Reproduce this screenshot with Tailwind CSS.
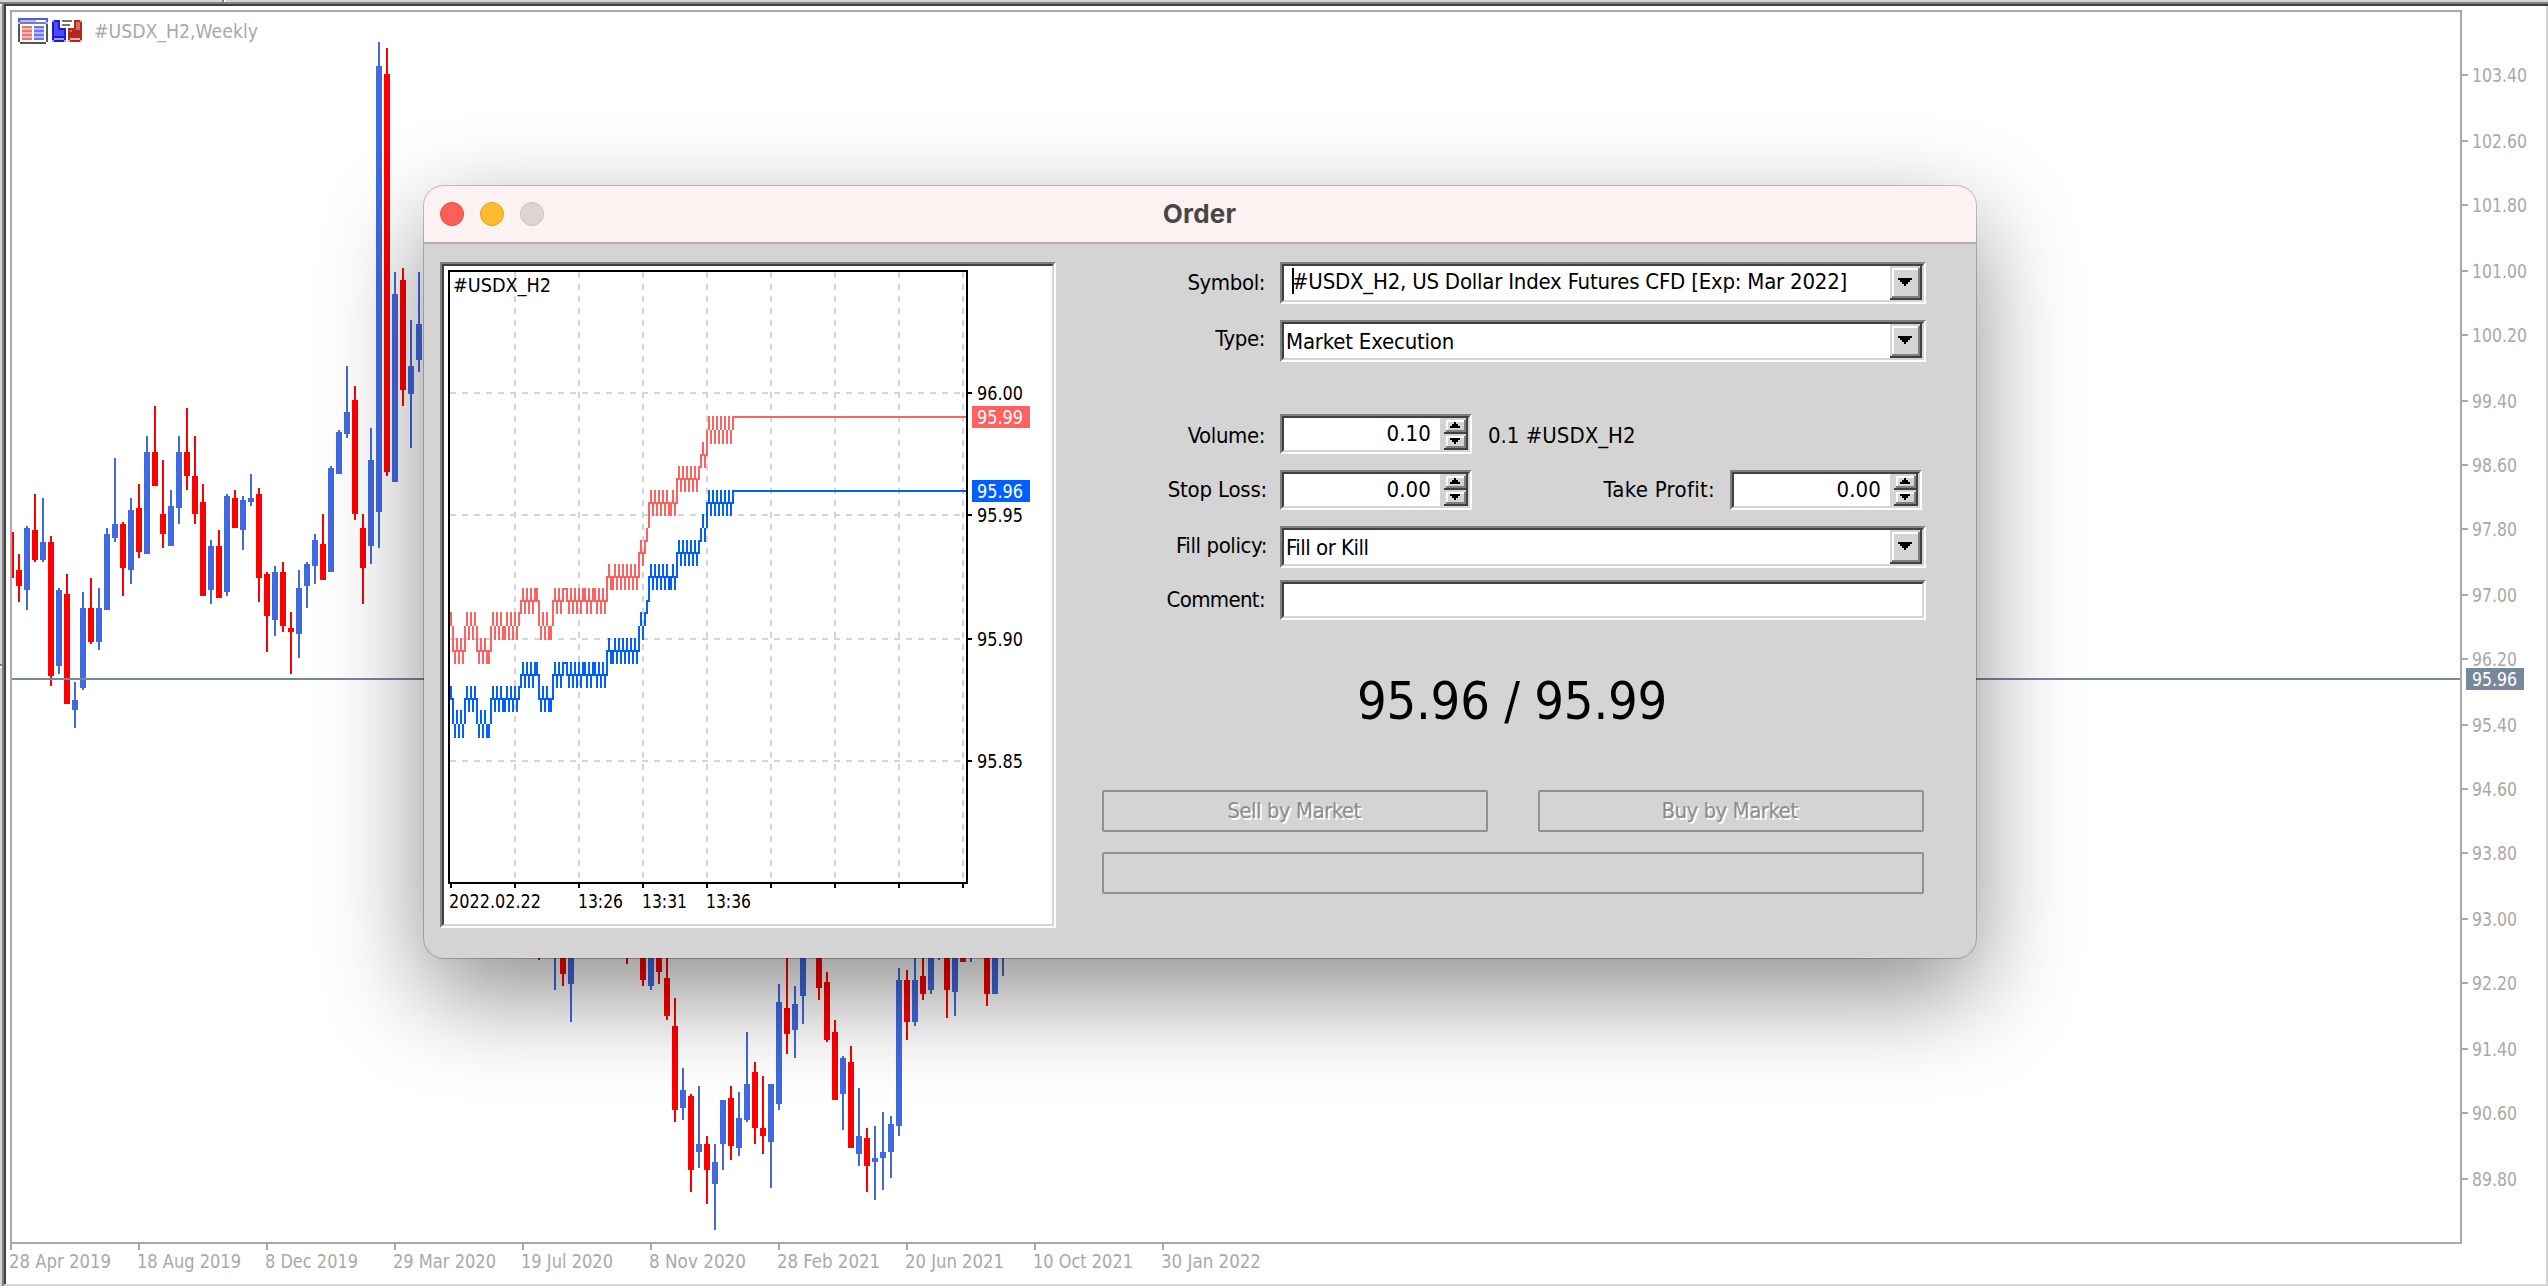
<!DOCTYPE html>
<html>
<head>
    <meta charset="utf-8">
    <title>Order</title>
    <script src="https://cdn.jsdelivr.net/npm/@tailwindcss/browser@4"></script>
</head>
<body class="relative w-[2548px] h-[1286px] overflow-hidden bg-white font-['DejaVu_Sans_Condensed','DejaVu_Sans',sans-serif]">
    <!-- Weekly chart -->
    <svg id="chart" class="block" width="2548" height="1286" shape-rendering="crispEdges">
        <path fill="#d4d4d4" d="M0 0h2548v2H0zM0 0h2v1286H0zM2546 6h2v1280h-2zM4 1284h2544v2H4z"/>
        <path fill="#808080" d="M0 2h2548v2H0zM2 2h2v1284h-2zM222 0h2v2h-2zM0 664h2v2H0z"/>
        <path fill="#404040" d="M4 4h2544v2H4zM4 4h2v1280h-2z"/>
        <path fill="#fff" d="M224 0h2v2h-2zM0 4h2v2H0zM0 666h2v2H0z"/>
        <g id="candles"></g>
        <path fill="#778899" d="M12 678h2448v2H12z"/>
        <path fill="#a9a9a9" d="M10 10h2452v2H10zM10 10h2v1240h-2zM2460 10h2v1234h-2zM10 1242h2452v2H10z"/>
        <g id="axes" fill="#a9a9a9" font-size="19"></g>
        <rect x="2466" y="668" width="58" height="22" fill="#778899"/>
        <text x="2472" y="686" font-size="19" fill="#fff" textLength="45" lengthAdjust="spacingAndGlyphs">95.96</text>

        <!-- depth of market icon -->
        <g>
            <path fill="#555" d="M18 24h30v18H18zM20 42h26v2H20z"/>
            <path fill="#5058f0" d="M18 18h30v4H18z"/>
            <path fill="#b8b8ff" d="M20 20h16v2H20zM18 22h30v2H18z"/>
            <path fill="#fff" d="M36 20h10v2H36zM20 24h26v18H20z"/>
            <path fill="#7080b0" d="M20 22h26v2H20z"/>
            <path fill="#f3b5ae" d="M22 26h10v14H22z"/>
            <path fill="#e07870" d="M22 26h10v2H22zM22 30h10v2H22zM22 34h10v2H22zM22 38h10v2H22z"/>
            <path fill="#b8b8ff" d="M34 26h10v14H34z"/>
            <path fill="#7070f8" d="M34 26h10v2H34zM34 30h10v2H34zM34 34h10v2H34zM34 38h10v2H34z"/>
        </g>
        <!-- one click trading icon -->
        <g>
            <path fill="#1a1ae0" d="M52 20h8v8h6v14H52z"/>
            <path fill="#4c4cf0" d="M54 22h4v8h6v6H54z"/>
            <path fill="#a0a0ff" d="M54 38h10v2H54zM52 20h2v2h-2zM52 40h2v2h-2zM64 40h2v2h-2z"/>
            <path fill="#b02820" d="M74 20h8v22H68V28h6z"/>
            <path fill="#d86860" d="M76 22h4v8h-4zM70 30h2v2h-2z"/>
            <path fill="#f0a8a0" d="M70 38h10v2H70zM80 20h2v2h-2zM68 40h2v2h-2zM80 40h2v2h-2z"/>
            <path fill="#707870" d="M62 20h10v2H62zM62 24h8v2h-8z"/>
        </g>
        <text x="94" y="38" font-size="19" fill="#a9a9a9" textLength="164" lengthAdjust="spacingAndGlyphs">#USDX_H2,Weekly</text>
    </svg>

    <!-- Order window -->
    <div class="absolute left-[424px] top-[186px] w-[1552px] h-[772px] flex flex-col rounded-[20px] overflow-hidden bg-[#d4d4d4] shadow-[0_0_0_1px_rgba(0,0,0,0.22),0_36px_100px_rgba(0,0,0,0.45)]">
        <div class="relative h-[58px] shrink-0 flex items-center justify-center bg-[#fcf2f1] border-b-2 border-[#b4b0b0]">
            <div class="absolute left-4 flex gap-4">
                <div class="size-6 rounded-full bg-[#ff5f57] border border-[#e2463f]"></div>
                <div class="size-6 rounded-full bg-[#febc2e] border border-[#e1a116]"></div>
                <div class="size-6 rounded-full bg-[#ddd4d4] border border-[#cbc3c3]"></div>
            </div>
            <span class="pb-0.5 pr-px font-['Inter',sans-serif] font-bold text-[26px] tracking-[0.2px] text-[#4a4646]">Order</span>
        </div>

        <div class="flex pl-4 pt-[18px]">
            <!-- Tick chart -->
            <div class="w-[616px] h-[666px] shrink-0 border-2 border-t-[#808080] border-l-[#808080] border-b-white border-r-white">
                <div class="w-[612px] h-[662px] border-2 border-t-[#404040] border-l-[#404040] border-b-[#d4d4d4] border-r-[#d4d4d4] bg-white">
                    <svg id="ticks" class="block" width="608" height="658" viewBox="444 266 608 658" shape-rendering="crispEdges">
                        <path stroke="#d4d4d4" stroke-width="2" stroke-dasharray="6 6" d="M450 393H966M450 515H966M450 639H966M450 761H966M515 272V882M579 272V882M643 272V882M707 272V882M771 272V882M835 272V882M899 272V882M963 272V882"/>
                        <g id="lines"></g>
                        <path fill="none" stroke="#000" stroke-width="2" d="M449 271H967V883H449z"/>
                        <path stroke="#000" stroke-width="2" d="M968 393h4M968 515h4M968 639h4M968 761h4M451 884v4M515 884v4M579 884v4M643 884v4M707 884v4M771 884v4M835 884v4M899 884v4M963 884v4"/>
                        <rect x="972" y="406" width="58" height="22" fill="#ff6060"/>
                        <rect x="972" y="480" width="58" height="22" fill="#0060ff"/>
                        <g font-size="19">
                            <text x="453" y="292" textLength="98" lengthAdjust="spacingAndGlyphs">#USDX_H2</text>
                            <text x="977" y="400" textLength="46" lengthAdjust="spacingAndGlyphs">96.00</text>
                            <text x="977" y="424" textLength="46" lengthAdjust="spacingAndGlyphs" fill="#fff">95.99</text>
                            <text x="977" y="498" textLength="46" lengthAdjust="spacingAndGlyphs" fill="#fff">95.96</text>
                            <text x="977" y="522" textLength="46" lengthAdjust="spacingAndGlyphs">95.95</text>
                            <text x="977" y="646" textLength="46" lengthAdjust="spacingAndGlyphs">95.90</text>
                            <text x="977" y="768" textLength="46" lengthAdjust="spacingAndGlyphs">95.85</text>
                            <text x="449" y="908" textLength="92" lengthAdjust="spacingAndGlyphs">2022.02.22</text>
                            <text x="578" y="908" textLength="45" lengthAdjust="spacingAndGlyphs">13:26</text>
                            <text x="642" y="908" textLength="45" lengthAdjust="spacingAndGlyphs">13:31</text>
                            <text x="706" y="908" textLength="45" lengthAdjust="spacingAndGlyphs">13:36</text>
                        </g>
                    </svg>
                </div>
            </div>

            <!-- Order form -->
            <div class="ml-[46px] w-[824px] text-[22px] leading-[26px] tracking-[-0.4px] text-black">
                <div class="flex items-center h-[42px]">
                    <label class="w-[163px] mr-[15px] text-right">Symbol:</label>
                    <div class="w-[646px] h-[42px] border-2 border-t-[#808080] border-l-[#808080] border-b-white border-r-white">
                        <div class="h-[38px] flex border-2 border-t-[#404040] border-l-[#404040] border-b-[#d4d4d4] border-r-[#d4d4d4] bg-white">
                            <div class="relative flex-1 pl-2 pt-[3px] whitespace-nowrap tracking-[-0.22px]"><span class="absolute left-2 top-0.5 w-0.5 h-[26px] bg-black"></span>#USDX_H2, US Dollar Index Futures CFD [Exp: Mar 2022]</div>
                            <svg width="32" height="34" shape-rendering="crispEdges"><use href="#drop"/></svg>
                        </div>
                    </div>
                </div>
                <div class="flex items-center h-[42px] mt-4">
                    <label class="w-[163px] mr-[15px] pb-[5px] text-right">Type:</label>
                    <div class="w-[646px] h-[42px] border-2 border-t-[#808080] border-l-[#808080] border-b-white border-r-white">
                        <div class="h-[38px] flex border-2 border-t-[#404040] border-l-[#404040] border-b-[#d4d4d4] border-r-[#d4d4d4] bg-white">
                            <div class="flex-1 pl-0.5 pt-[5px] tracking-[-0.2px]">Market Execution</div>
                            <svg width="32" height="34" shape-rendering="crispEdges"><use href="#drop"/></svg>
                        </div>
                    </div>
                </div>
                <div class="flex items-center h-10 mt-[52px]">
                    <label class="w-[163px] mr-[15px] pt-1 text-right">Volume:</label>
                    <div class="w-48 h-10 border-2 border-t-[#808080] border-l-[#808080] border-b-white border-r-white">
                        <div class="h-9 flex border-2 border-t-[#404040] border-l-[#404040] border-b-[#d4d4d4] border-r-[#d4d4d4] bg-white">
                            <div class="flex-1 pr-[9px] pt-[3px] text-right tracking-[0.1px]">0.10</div>
                            <svg width="28" height="32" shape-rendering="crispEdges"><use href="#spin"/></svg>
                        </div>
                    </div>
                    <span class="ml-4 pt-1 tracking-[0px]">0.1 #USDX_H2</span>
                </div>
                <div class="flex items-center h-10 mt-4">
                    <label class="w-[165px] mr-[13px] text-right tracking-[-0.2px]">Stop Loss:</label>
                    <div class="w-48 h-10 border-2 border-t-[#808080] border-l-[#808080] border-b-white border-r-white">
                        <div class="h-9 flex border-2 border-t-[#404040] border-l-[#404040] border-b-[#d4d4d4] border-r-[#d4d4d4] bg-white">
                            <div class="flex-1 pr-[9px] pt-[3px] text-right tracking-[0.1px]">0.00</div>
                            <svg width="28" height="32" shape-rendering="crispEdges"><use href="#spin"/></svg>
                        </div>
                    </div>
                    <label class="w-[243px] mr-[15px] text-right tracking-[0.3px]">Take Profit:</label>
                    <div class="w-48 h-10 border-2 border-t-[#808080] border-l-[#808080] border-b-white border-r-white">
                        <div class="h-9 flex border-2 border-t-[#404040] border-l-[#404040] border-b-[#d4d4d4] border-r-[#d4d4d4] bg-white">
                            <div class="flex-1 pr-[9px] pt-[3px] text-right tracking-[0.1px]">0.00</div>
                            <svg width="28" height="32" shape-rendering="crispEdges"><use href="#spin"/></svg>
                        </div>
                    </div>
                </div>
                <div class="flex items-center h-[42px] mt-4">
                    <label class="w-[165px] mr-[13px] pb-0.5 text-right">Fill policy:</label>
                    <div class="w-[646px] h-[42px] border-2 border-t-[#808080] border-l-[#808080] border-b-white border-r-white">
                        <div class="h-[38px] flex border-2 border-t-[#404040] border-l-[#404040] border-b-[#d4d4d4] border-r-[#d4d4d4] bg-white">
                            <div class="flex-1 pl-0.5 pt-[5px] tracking-[-0.5px]">Fill or Kill</div>
                            <svg width="32" height="34" shape-rendering="crispEdges"><use href="#drop"/></svg>
                        </div>
                    </div>
                </div>
                <div class="flex items-center h-10 mt-3">
                    <label class="w-[163px] mr-[15px] text-right tracking-[-0.65px]">Comment:</label>
                    <div class="w-[646px] h-10 border-2 border-t-[#808080] border-l-[#808080] border-b-white border-r-white">
                        <div class="h-9 border-2 border-t-[#404040] border-l-[#404040] border-b-[#d4d4d4] border-r-[#d4d4d4] bg-white"></div>
                    </div>
                </div>

                <div class="h-[170px] pt-[49px] pr-1 text-center text-[52px] leading-[64px] tracking-[-0.25px]">95.96 / 95.99</div>

                <div class="flex justify-between w-[822px] tracking-[-0.5px] text-[#8c8c8c] [text-shadow:2px_2px_0_#fff]">
                    <div class="w-[386px] h-[42px] pr-0.5 flex items-center justify-center border-2 border-[#909090] rounded-[2px]">Sell by Market</div>
                    <div class="w-[386px] h-[42px] pr-[3px] flex items-center justify-center border-2 border-[#909090] rounded-[2px]">Buy by Market</div>
                </div>
                <div class="mt-5 w-[822px] h-[42px] border-2 border-[#909090] rounded-[2px]"></div>
            </div>
        </div>
    </div>

    <svg class="hidden">
        <defs>
            <g id="drop">
                <path fill="#404040" d="M0 0h32v34H0z"/>
                <path fill="#d4d4d4" d="M0 0h30v32H0z"/>
                <path fill="#808080" d="M2 2h28v30H2z"/>
                <path fill="#fff" d="M2 2h26v28H2z"/>
                <path fill="#d4d4d4" d="M4 4h24v26H4z"/>
                <path d="M8 12h14v2H8zM10 14h10v2H10zM12 16h6v2h-6zM14 18h2v2h-2z"/>
            </g>
            <g id="btn">
                <path fill="#404040" d="M0 0h24v16H0z"/>
                <path fill="#d4d4d4" d="M0 0h22v14H0z"/>
                <path fill="#808080" d="M2 2h20v12H2z"/>
                <path fill="#fff" d="M2 2h18v10H2z"/>
                <path fill="#d4d4d4" d="M4 4h16v8H4z"/>
            </g>
            <g id="spin">
                <path fill="#d4d4d4" d="M0 0h28v32H0z"/>
                <use href="#btn" x="4" y="0"/>
                <use href="#btn" x="4" y="16"/>
                <path d="M14 4h2v2h-2zM12 6h6v2h-6zM10 8h10v2H10zM10 20h10v2H10zM12 22h6v2h-6zM14 24h2v2h-2z"/>
            </g>
        </defs>
    </svg>

    <script>
        // slot, direction (1 up, 0 down), high, body top, body bottom, low
        const candles = [
            [0,0,554,570,586,602],[1,1,526,528,590,610],[2,0,494,530,560,562],[3,1,498,542,560,562],[4,0,536,542,676,686],
            [5,1,588,590,666,674],[6,0,574,594,704,704],[7,1,682,700,710,728],[8,1,592,608,688,690],[9,0,578,608,642,644],
            [10,1,588,608,642,650],[11,1,528,534,610,610],[12,1,458,524,538,542],[13,0,522,524,568,596],[14,1,498,510,570,584],
            [15,0,484,508,552,558],[16,1,436,452,554,554],[17,0,406,452,486,486],[18,0,460,514,534,548],[19,1,490,506,546,546],
            [20,1,436,452,508,524],[21,0,408,452,476,490],[22,0,436,476,514,524],[23,0,484,502,596,596],[24,1,540,546,590,604],
            [25,0,530,546,598,598],[26,1,494,496,592,596],[27,0,490,498,528,528],[28,1,496,500,530,550],[29,1,474,498,502,506],
            [30,0,488,494,578,602],[31,0,572,574,616,652],[32,1,566,572,620,636],[33,0,562,572,626,632],[34,0,612,628,632,674],
            [35,1,570,588,634,658],[36,1,562,564,586,608],[37,1,534,540,566,584],[38,0,514,544,580,580],[39,1,466,468,572,572],
            [40,1,430,432,474,474],[41,1,366,412,434,438],[42,0,386,400,514,520],[43,0,514,528,568,604],[44,1,428,460,546,564],
            [45,1,42,66,512,548],[46,0,48,74,472,476],[47,1,272,294,482,482],[48,0,268,280,390,406],[49,1,320,366,394,448],
            [50,1,272,324,360,372],[65,0,940,940,940,960],[67,1,940,940,940,990],[68,0,940,940,974,986],[69,1,940,940,984,1022],
            [76,0,940,940,940,964],[78,0,940,940,980,986],[79,1,940,940,986,990],[80,0,940,940,972,984],[81,0,940,978,1016,1020],
            [82,0,998,1026,1110,1122],[83,1,1068,1090,1108,1120],[84,0,1094,1096,1170,1192],[85,1,1086,1144,1152,1168],[86,0,1136,1144,1170,1204],
            [87,1,1144,1162,1184,1230],[88,1,1100,1100,1144,1170],[89,0,1086,1098,1146,1160],[90,1,1092,1118,1148,1156],[91,1,1032,1084,1120,1122],
            [92,0,1062,1072,1128,1144],[93,0,1076,1128,1136,1154],[94,1,1084,1084,1142,1188],[95,1,984,1002,1104,1110],[96,0,940,1008,1034,1054],
            [97,1,986,1004,1030,1058],[98,1,940,940,996,1024],[100,0,940,940,988,1000],[101,0,972,982,1040,1042],[102,0,1020,1032,1100,1100],
            [103,1,1056,1058,1094,1130],[104,0,1046,1062,1148,1148],[105,1,1088,1136,1154,1166],[106,0,1128,1138,1166,1192],[107,1,1126,1158,1162,1200],
            [108,1,1112,1152,1158,1190],[109,1,1116,1124,1152,1178],[110,1,968,980,1126,1136],[111,0,970,980,1022,1040],[112,1,940,980,1022,1026],
            [113,0,940,976,994,1000],[114,1,940,940,990,994],[115,1,940,940,940,960],[116,0,940,940,990,1018],[117,1,940,940,992,1016],
            [118,0,940,940,962,962],[119,1,940,940,940,962],[121,0,940,940,994,1006],[122,1,940,940,994,994],[123,1,940,940,940,976]
        ];
        let out = '<path fill="#f00" d="M12 532h2v46h-2z"/>';
        candles.forEach(([i, up, h, t, b, l]) => {
            const x = 16 + i * 8;
            out += `<path fill="${up ? '#4169e1' : '#f00'}" d="M${x + 2} ${h}h2V${l}h-2zM${x} ${t}h6V${b}h-6z"/>`;
        });
        document.getElementById('candles').innerHTML = out;

        // price and date scales
        const prices = [74, 140, 204, 270, 334, 400, 464, 528, 594, 658, 724, 788, 852, 918, 982, 1048, 1112, 1178];
        const dates = [['28 Apr 2019', 102], ['18 Aug 2019', 104], ['8 Dec 2019', 93], ['29 Mar 2020', 103], ['19 Jul 2020', 92],
            ['8 Nov 2020', 97], ['28 Feb 2021', 103], ['20 Jun 2021', 99], ['10 Oct 2021', 100], ['30 Jan 2022', 100]];
        out = '';
        prices.forEach((y, i) => {
            const p = (103.4 - i * 0.8).toFixed(2);
            out += `<path d="M2462 ${y}h6v2h-6z"/><text x="2472" y="${y + 8}" textLength="${p.length > 5 ? 55 : 45}" lengthAdjust="spacingAndGlyphs">${p}</text>`;
        });
        dates.forEach(([d, w], i) => {
            const x = 10 + i * 128;
            out += `<path d="M${x} 1244h2v6h-2z"/><text x="${x - 1}" y="1268" textLength="${w}" lengthAdjust="spacingAndGlyphs">${d}</text>`;
        });
        document.getElementById('axes').innerHTML = out;

        // ticks: one column per pair of letters, top and bottom price level
        const levels = [416,430,442,454,466,478,490,502,514,528,540,552,564,576,588,600,612,626,638,650,662,674,686,698,710,724,736];
        const cols = ('qr rt tu st tu st tu rt qr rs qr rs qr rt tu st tu st tu tu rt qr rs qr rs qr rs rs qr rs qr rs qr rs qr pq ' +
            'op pq op pq op pq op op pr rs qr rs qr rs rs pr op pq op pq op oo op pq op pq op pq op pq op op pq op pq op op pq op pq op pq np ' +
            'mn no no mn no mn no mn no mn no mn no mn no ln kl lm kl jk hj gh hi gh hi gh hi gh hi gh hi hi gh hi fh ' +
            'ef fg ef fg ef fg ef fg ef fg ef de cd de bd ab bc ab bc ab bc ab bc ab bc ab bc ab').split(' ');
        const line = (shift, color) => {
            let d = '';
            cols.forEach((c, k) => {
                const a = c.charCodeAt(0) - 97 + shift, b = c.charCodeAt(1) - 97 + shift;
                const end = levels[b] + (b && levels[b] - levels[b - 1] === 14 ? 0 : 2);
                d += `M${450 + k * 2} ${levels[a]}h2V${end}h-2z`;
            });
            const x = 450 + cols.length * 2;
            return `<path fill="${color}" d="${d}M${x} ${levels[shift]}H966v2H${x}z"/>`;
        };
        document.getElementById('lines').innerHTML = line(0, '#ff6060') + line(6, '#0060ff');
    </script>
</body>
</html>
